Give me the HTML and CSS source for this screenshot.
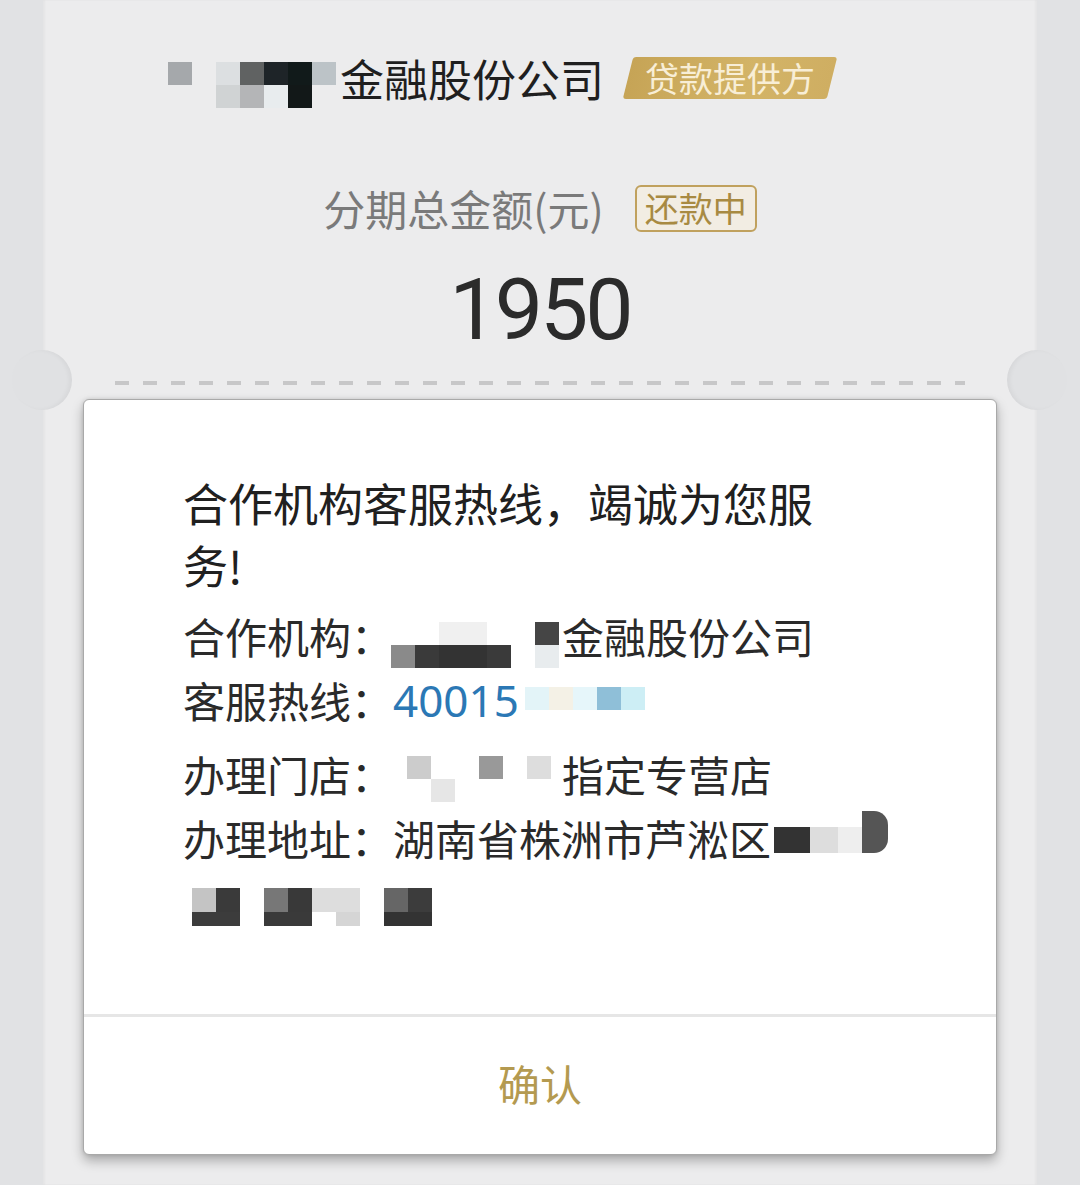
FILE: index.html
```html
<!DOCTYPE html>
<html lang="zh-CN">
<head>
<meta charset="utf-8">
<title>分期详情</title>
<link rel="stylesheet" href="styles.css">
</head>
<body>
<div class="page">
  <div class="card">
    <span class="notch notch-left"></span>
    <span class="notch notch-right"></span>
    <div class="card-top">
      <div class="provider">
        <div class="mosaic mz-head">
          <i class="c-a5"></i><i></i><i class="c-dc"></i><i class="c-60"></i><i class="c-1e"></i><i class="c-11"></i><i class="c-bc"></i>
          <i></i><i></i><i class="c-d0"></i><i class="c-b4"></i><i class="c-e8"></i><i class="c-12"></i><i></i>
        </div>
        <span class="provider-name">金融股份公司</span>
        <span class="badge-provider"><span class="badge-provider-text">贷款提供方</span></span>
      </div>
      <div class="amount-row">
        <span class="amount-label">分期总金额(元)</span>
        <span class="badge-status">还款中</span>
      </div>
      <div class="amount">1950</div>
      <div class="dashed"></div>
    </div>

    <div class="modal">
      <div class="modal-body">
        <p class="modal-title">合作机构客服热线，竭诚为您服务!</p>
        <div class="info-group">
          <div class="info-line"><span class="label">合作机构：</span><span class="mosaic mz-org">
            <i></i><i></i><i class="c-f0"></i><i class="c-f0"></i><i></i><i></i><i class="c-45"></i>
            <i class="c-8a"></i><i class="c-3a"></i><i class="c-33"></i><i class="c-33"></i><i class="c-3a"></i><i></i><i class="c-e8"></i>
          </span>金融股份公司</div>
          <div class="info-line"><span class="label">客服热线：</span><span class="phone">40015</span><span class="mosaic mz-phone">
            <i class="c-e3b"></i><i class="c-f2y"></i><i class="c-e6b"></i><i class="c-8fb"></i><i class="c-cdb"></i>
          </span></div>
        </div>
        <div class="info-group">
          <div class="info-line"><span class="label">办理门店：</span><span class="mosaic mz-store">
            <i></i><i class="c-cc"></i><i></i><i></i><i class="c-99"></i><i></i><i class="c-dd"></i>
            <i></i><i></i><i class="c-e6"></i><i></i><i></i><i></i><i></i>
          </span>指定专营店</div>
          <div class="info-line"><span class="label">办理地址：</span>湖南省株洲市芦淞区<span class="mosaic mz-addr">
            <i class="c-33"></i><i class="c-dd"></i><i class="c-ee"></i><i class="c-55 round"></i>
          </span></div>
          <div class="info-line"><span class="mosaic mz-addr2">
            <i class="c-c4"></i><i class="c-3a"></i><i></i><i class="c-77"></i><i class="c-39"></i><i class="c-dd"></i><i class="c-dd"></i><i></i><i class="c-66"></i><i class="c-3c"></i>
            <i class="c-3c"></i><i class="c-3c"></i><i></i><i class="c-3a"></i><i class="c-3a"></i><i></i><i class="c-d5"></i><i></i><i class="c-33"></i><i class="c-33"></i>
          </span></div>
        </div>
      </div>
      <div class="modal-footer">
        <span class="confirm">确认</span>
      </div>
    </div>
  </div>
</div>
</body>
</html>
```

FILE: styles.css
```css
* { box-sizing: border-box; }

html, body {
  margin: 0;
  padding: 0;
}

body {
  background: #e1e2e4;
  font-family: "Noto Sans CJK SC", "Noto Sans", sans-serif;
  color: #222;
}

.page {
  width: 1080px;
  height: 1185px;
  overflow: hidden;
  padding: 0 43px;
}

.card {
  position: relative;
  height: 1185px;
  background: #ececed;
  box-shadow: inset 2px 0 2px rgba(0,0,0,0.03), inset -2px 0 2px rgba(0,0,0,0.03);
}

.notch {
  position: absolute;
  top: 350px;
  width: 60px;
  height: 60px;
  border-radius: 50%;
  background: #e0e1e3;
}
.notch-left { left: -31px; box-shadow: inset -3px 0 4px rgba(0,0,0,0.04); }
.notch-right { right: -30px; box-shadow: inset 3px 0 4px rgba(0,0,0,0.04); }

.card-top {
  padding-top: 53px;
}

/* header: provider */
.provider {
  display: flex;
  align-items: center;
  height: 50px;
  padding-left: 122px;
}

.provider-name {
  font-size: 44px;
  line-height: 50px;
  color: #1f1f1f;
  margin-left: 4px;
}

.badge-provider {
  margin-left: 24px;
  height: 42px;
  width: 204px;
  display: flex;
  align-items: center;
  justify-content: center;
  transform: skewX(-14deg);
  background: linear-gradient(90deg, #c6a456 0%, #d3b467 60%, #cfae62 100%);
  border-radius: 3px;
}
.badge-provider-text {
  transform: skewX(14deg);
  font-size: 34px;
  line-height: 42px;
  color: #f8eed6;
}

/* amount */
.amount-row {
  display: flex;
  justify-content: center;
  align-items: center;
  gap: 31px;
  height: 48px;
  margin-top: 81px;
}
.amount-label {
  font-size: 42px;
  line-height: 48px;
  color: #7a7a7a;
}
.badge-status {
  width: 122px;
  height: 47px;
  border: 2.5px solid #c0a15e;
  border-radius: 6px;
  background: #f2ede3;
  color: #a88a42;
  font-size: 34px;
  line-height: 42px;
  text-align: center;
}

.amount {
  margin-top: 28px;
  text-align: center;
  font-family: "Roboto", "Noto Sans", sans-serif;
  font-size: 86px;
  line-height: 100px;
  letter-spacing: -3px;
  color: #2b2b2b;
}

.dashed {
  margin: 21px 72px 0 72px;
  height: 4px;
  background: repeating-linear-gradient(90deg, #c7c7c8 0 14px, transparent 14px 28px);
}

/* modal */
.modal {
  position: absolute;
  top: 399px;
  left: 40px;
  width: 914px;
  height: 756px;
  background: #fff;
  border: 1px solid #a9a9a9;
  border-radius: 6px;
  box-shadow: 0 6px 12px rgba(0,0,0,0.28), 0 0 4px rgba(0,0,0,0.12);
  display: flex;
  flex-direction: column;
}

.modal-body {
  height: 614px;
  padding: 72px 99px 0 99px;
}

.modal-title {
  margin: 0;
  max-width: 650px;
  font-size: 45px;
  line-height: 62px;
  color: #202020;
}

.info-group {
  margin-top: 8px;
}
.info-group + .info-group {
  margin-top: 10px;
}

.info-line {
  display: flex;
  align-items: center;
  font-size: 42px;
  line-height: 64px;
  height: 64px;
  color: #2a2a2a;
  white-space: nowrap;
}

.phone {
  font-family: "Noto Sans", "Noto Sans CJK SC", sans-serif;
  color: #2b78b5;
  font-size: 44px;
}

/* mosaics */
.mosaic {
  display: inline-grid;
  grid-auto-rows: 23px;
}
.mosaic i {
  display: block;
}
.mz-head {
  grid-template-columns: repeat(7, 24px);
  margin-top: 14px;
  margin-left: 3px;
}
.mz-org {
  grid-template-columns: repeat(7, 24px);
  margin-left: -2px;
  margin-right: 3px;
  margin-top: 18px;
}
.mz-phone {
  grid-template-columns: repeat(5, 24px);
  margin-left: 6px;
  margin-top: -4px;
}
.mz-store {
  grid-template-columns: 14px repeat(6, 24px);
  margin-top: 10px;
  margin-right: 11px;
}
.mz-addr {
  grid-template-columns: 36px 28px 24px 26px;
  grid-auto-rows: 26px;
  margin-left: 3px;
  margin-top: 4px;
}
.mz-addr .round {
  height: 42px;
  margin-top: -16px;
  border-radius: 0 14px 14px 0;
}
.mz-addr2 {
  grid-template-columns: repeat(10, 24px);
  grid-template-rows: 24px 14px;
  margin-left: 9px;
  margin-top: 10px;
}

.c-a5 { background: #a5a8ab; }
.c-dc { background: #dcdfe1; }
.c-60 { background: #606262; }
.c-1e { background: #1e2428; }
.c-11 { background: #111a1a; }
.c-bc { background: #bcc3c7; }
.c-d0 { background: #d0d3d4; }
.c-b4 { background: #b4b5b7; }
.c-e8 { background: #e8ecee; }
.c-12 { background: #121818; }
.c-f0 { background: #f0f0f0; }
.c-45 { background: #454545; }
.c-8a { background: #8a8a8a; }
.c-3a { background: #3a3a3a; }
.c-33 { background: #333333; }
.c-39 { background: #393939; }
.c-3c { background: #3c3c3c; }
.c-cc { background: #cccccc; }
.c-99 { background: #999999; }
.c-dd { background: #dddddd; }
.c-e6 { background: #e6e6e6; }
.c-ee { background: #eeeeee; }
.c-55 { background: #555555; }
.c-c4 { background: #c4c4c4; }
.c-77 { background: #777777; }
.c-66 { background: #666666; }
.c-d5 { background: #d5d5d5; }
.c-e3b { background: #e3f4f8; }
.c-f2y { background: #f4f1e6; }
.c-e6b { background: #e6f6fa; }
.c-8fb { background: #8fbfd8; }
.c-cdb { background: #cdeef5; }

.modal-footer {
  flex: 1;
  border-top: 3px solid #e6e6e6;
  display: flex;
  align-items: center;
  justify-content: center;
}
.confirm {
  font-size: 42px;
  color: #b49a50;
  margin-top: -6px;
}
```
